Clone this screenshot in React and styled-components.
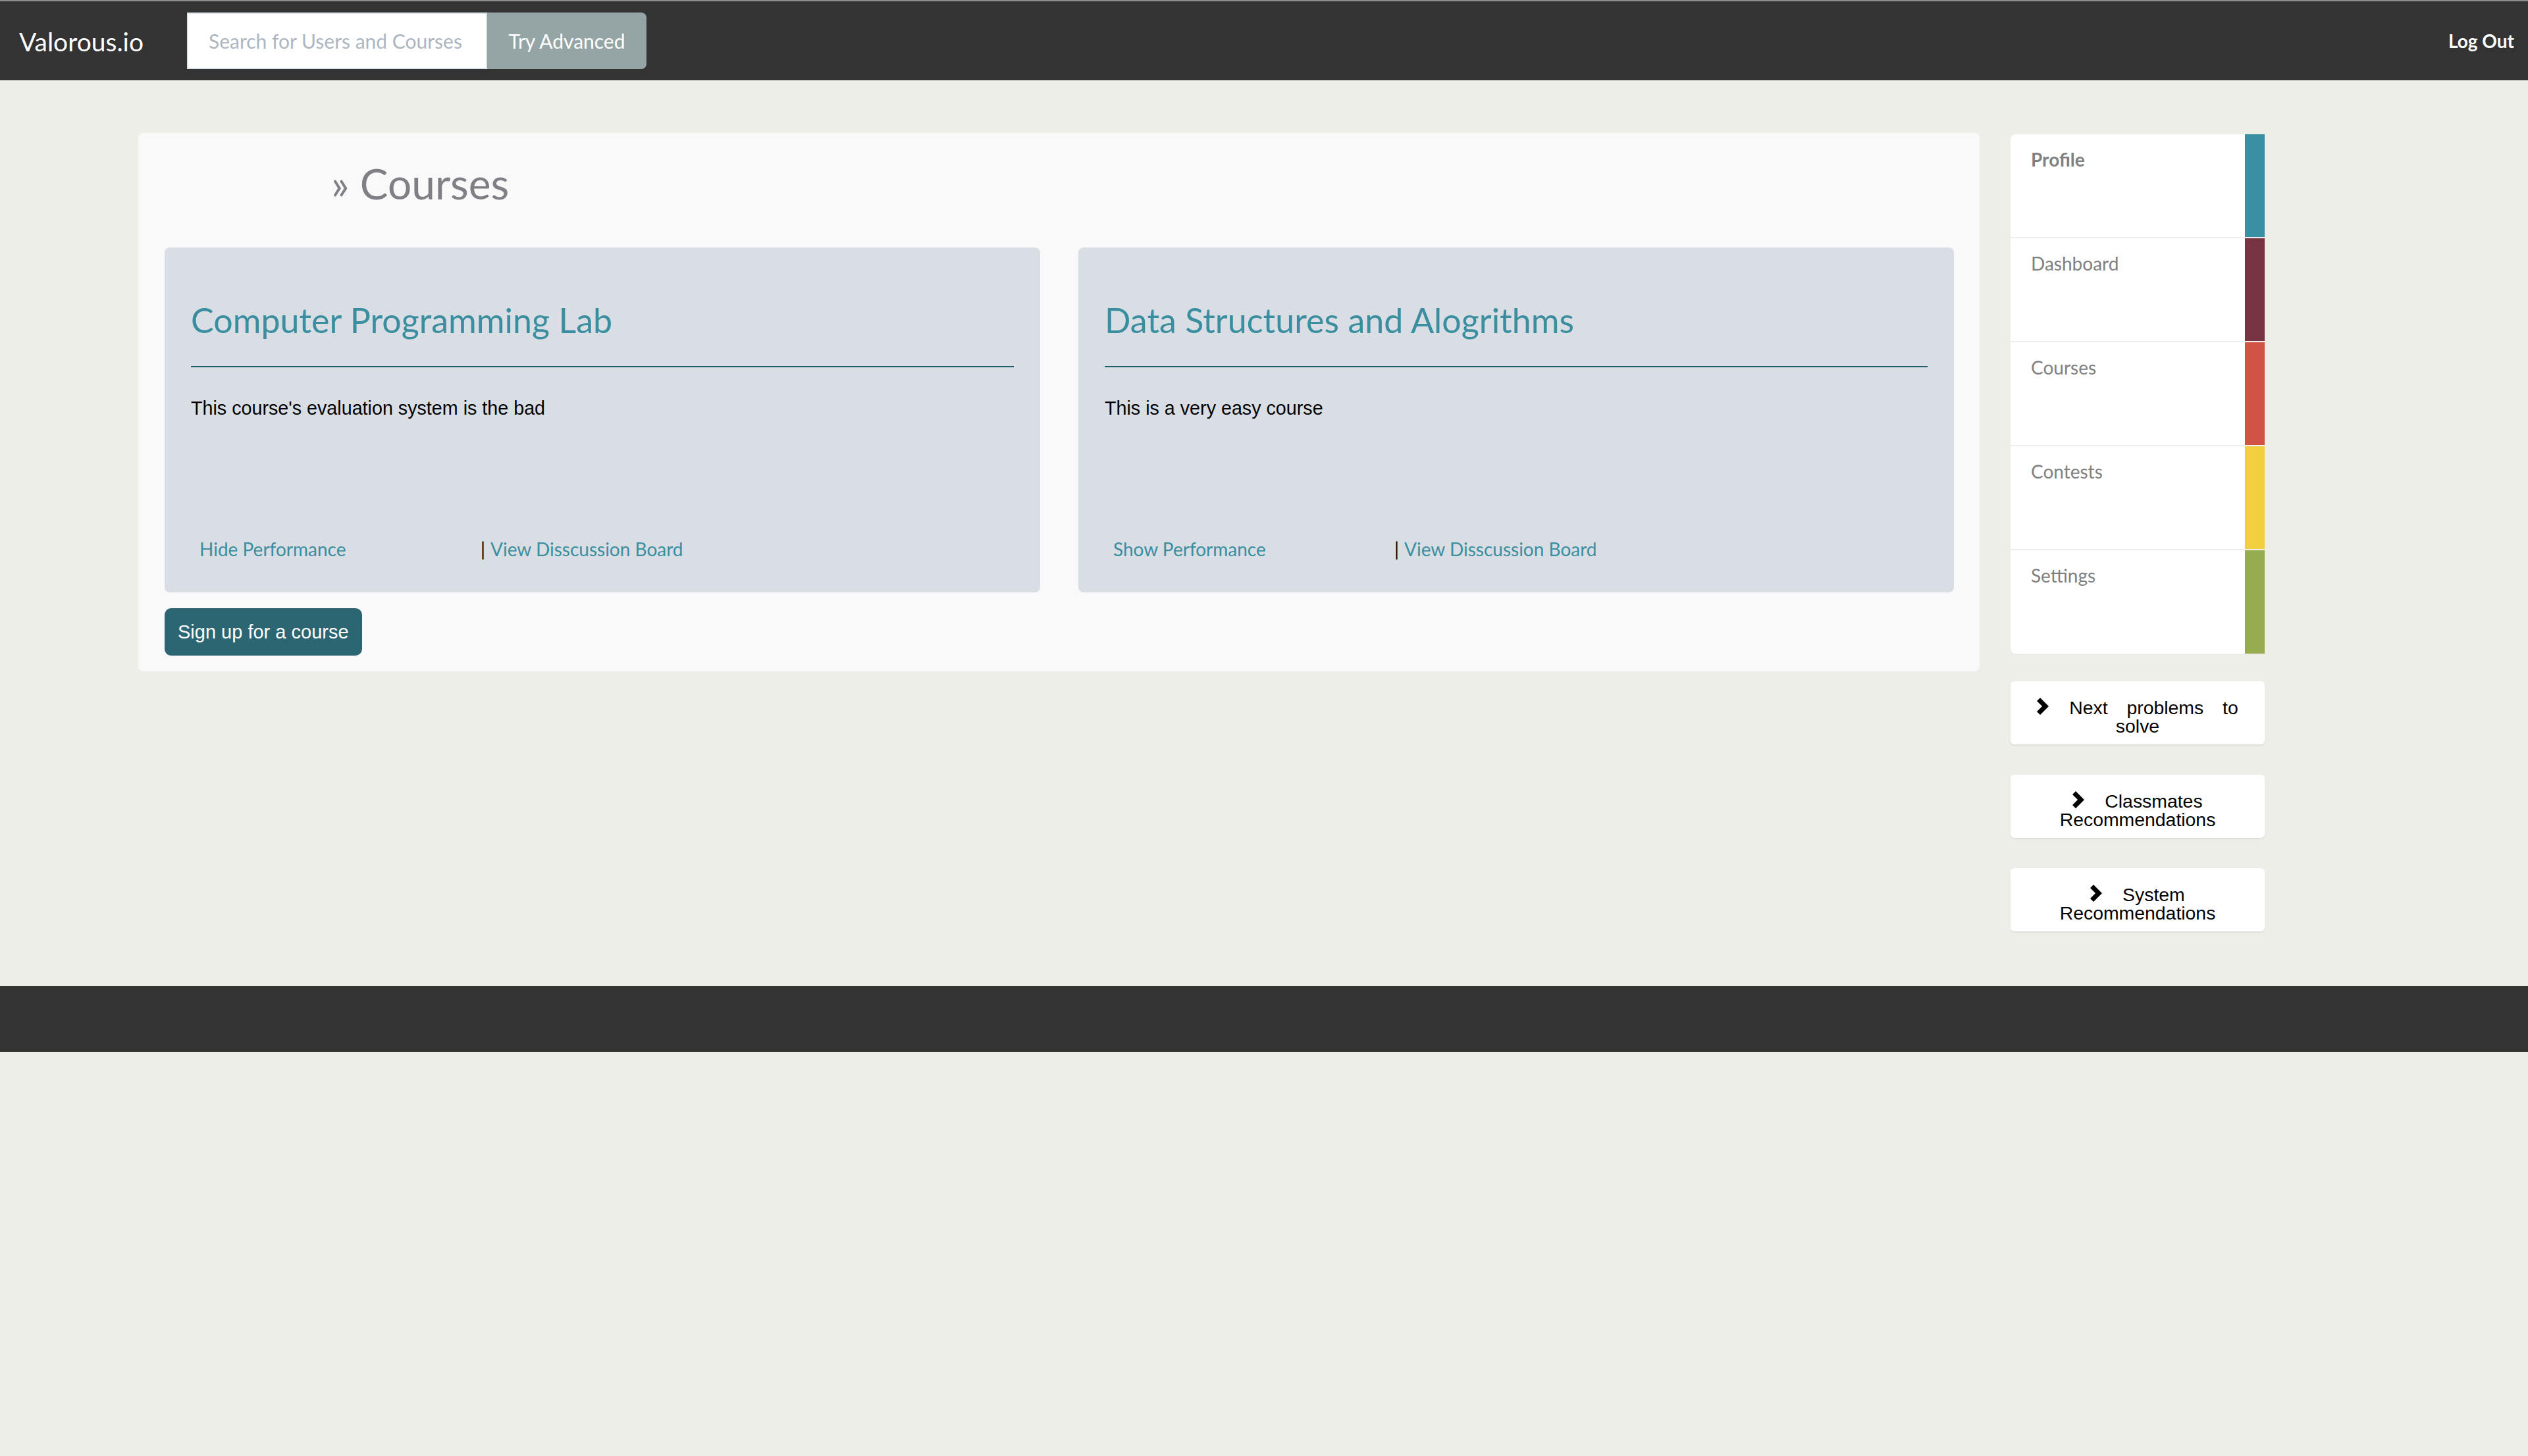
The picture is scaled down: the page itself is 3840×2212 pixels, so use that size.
import React from "react";
import styled, { createGlobalStyle } from "styled-components";

const GlobalStyle = createGlobalStyle`
  html, body {
    margin: 0;
    padding: 0;
    background-color: #eeeee8;
    font-family: Lato, "Open Sans", sans-serif;
  }
`;

const Header = styled.header`
  display: flex;
  align-items: center;
  height: 120px;
  background-color: #333333;
  border-top: 2px solid #8e8e8e;
`;

const Brand = styled.div`
  width: 284px;
  box-sizing: border-box;
  padding-left: 29px;
  color: #ffffff;
  font-size: 39px;
  line-height: 1;
  margin-top: 2px;
`;

const SearchForm = styled.form`
  display: flex;
  height: 86px;
`;

const SearchInput = styled.input`
  width: 456px;
  box-sizing: border-box;
  border: 2px solid #dbe3ea;
  padding: 0 0 0 31px;
  font-family: Lato, sans-serif;
  font-size: 30px;
  color: #333;
  outline: none;
  &::placeholder {
    color: #acb6c1;
  }
`;

const AdvancedButton = styled.button`
  width: 242px;
  border: none;
  border-radius: 0 8px 8px 0;
  background-color: #95a5a6;
  color: #ffffff;
  font-family: Lato, sans-serif;
  font-size: 30px;
  cursor: pointer;
`;

const LogOut = styled.a`
  margin-left: auto;
  padding-right: 21px;
  color: #ffffff;
  font-size: 28px;
  font-weight: 700;
  text-decoration: none;
`;

const Main = styled.main`
  display: flex;
  align-items: flex-start;
  gap: 47px;
  padding: 80px 0 83px 210px;
`;

const Panel = styled.section`
  width: 2797px;
  box-sizing: border-box;
  padding: 42px 39px 24px 40px;
  background-color: #f9f9f9;
  border-radius: 8px;
`;

const PageTitle = styled.h1`
  margin: 0 0 62px;
  padding-left: 253px;
  font-size: 64px;
  font-weight: 400;
  line-height: 70px;
  color: #7f7f85;
`;

const CardGrid = styled.div`
  display: grid;
  grid-template-columns: 1330px 1330px;
  gap: 58px;
`;

const Card = styled.article`
  display: flex;
  flex-direction: column;
  height: 524px;
  box-sizing: border-box;
  padding: 82px 40px 46px;
  background-color: #d9dee4;
  border-radius: 8px;
`;

const CardTitle = styled.h2`
  margin: 0;
  font-size: 52px;
  font-weight: 400;
  line-height: 57px;
  color: #3b8ea0;
`;

const Rule = styled.hr`
  margin: 41px 0 42px;
  border: none;
  border-top: 2px solid #1f5f68;
`;

const Description = styled.p`
  flex: 1;
  margin: 0;
  font-family: "Liberation Sans", Arial, sans-serif;
  font-size: 28.7px;
  line-height: 40px;
  color: #000;
`;

const LinkRow = styled.div`
  display: flex;
  align-items: center;
  font-size: 28px;
  line-height: 40px;
`;

const LinkCell = styled.div`
  width: ${(p) => p.width || "auto"};
  box-sizing: border-box;
  padding-left: ${(p) => p.pad || "0"};
`;

const Separator = styled.span`
  color: #000;
  margin-right: 8px;
`;

const TealLink = styled.a`
  color: #3b8ea0;
  text-decoration: none;
`;

const SignUpButton = styled.button`
  margin-top: 24px;
  height: 72px;
  padding: 0 20px;
  border: none;
  border-radius: 10px;
  background-color: #2c6672;
  color: #ffffff;
  font-family: "Liberation Sans", Arial, sans-serif;
  font-size: 29px;
  cursor: pointer;
`;

const Sidebar = styled.aside`
  width: 386px;
  display: flex;
  flex-direction: column;
  margin-top: 2px;
`;

const Nav = styled.nav`
  display: flex;
  flex-direction: column;
  background-color: #ffffff;
  border-radius: 8px 0 0 8px;
  overflow: hidden;
`;

const NavItem = styled.a`
  display: flex;
  box-sizing: border-box;
  border-bottom: ${(p) => (p.last ? "none" : "2px solid #eeeeee")};
  text-decoration: none;
  height: ${(p) => (p.last ? "157px" : "158px")};
`;

const NavLabel = styled.span`
  flex: 1;
  padding: 18px 0 0 31px;
  font-size: 28px;
  line-height: 40px;
  color: #808080;
  font-weight: ${(p) => (p.active ? 700 : 400)};
`;

const Stripe = styled.span`
  width: 30px;
  background-color: ${(p) => p.color};
`;

const RecList = styled.div`
  display: flex;
  flex-direction: column;
  gap: 46px;
  margin-top: 42px;
`;

const RecButton = styled.button`
  height: 96px;
  box-sizing: border-box;
  padding: 25px 10px 15px;
  border: none;
  border-radius: 6px;
  background-color: #ffffff;
  box-shadow: 0 2px 2px rgba(0, 0, 0, 0.07);
  font-family: "Liberation Sans", Arial, sans-serif;
  font-size: 28.4px;
  line-height: 28px;
  word-spacing: 21px;
  text-align: center;
  color: #000;
  cursor: pointer;
`;

const Chevron = () => (
  <svg width="20" height="26" viewBox="0 0 20 26" style={{ verticalAlign: "-1px" }}>
    <polygon points="0,5 5,0 18,13 5,26 0,21 8,13" fill="#000" />
  </svg>
);

const Footer = styled.footer`
  height: 100px;
  background-color: #333333;
`;

const courses = [
  {
    title: "Computer Programming Lab",
    description: "This course's evaluation system is the bad",
    performance: "Hide Performance",
  },
  {
    title: "Data Structures and Alogrithms",
    description: "This is a very easy course",
    performance: "Show Performance",
  },
];

const navItems = [
  { label: "Profile", color: "#3a8fa3", active: true },
  { label: "Dashboard", color: "#793441" },
  { label: "Courses", color: "#d05346" },
  { label: "Contests", color: "#f2cf3e" },
  { label: "Settings", color: "#97ab50" },
];

const recommendations = [
  "Next problems to solve",
  "Classmates Recommendations",
  "System Recommendations",
];

const App = () => {
  return (
    <>
      <GlobalStyle />
      <Header>
        <Brand>Valorous.io</Brand>
        <SearchForm onSubmit={(e) => e.preventDefault()}>
          <SearchInput type="text" placeholder="Search for Users and Courses" />
          <AdvancedButton type="button">Try Advanced</AdvancedButton>
        </SearchForm>
        <LogOut href="#">Log Out</LogOut>
      </Header>

      <Main>
        <Panel>
          <PageTitle>» Courses</PageTitle>
          <CardGrid>
            {courses.map((course) => (
              <Card key={course.title}>
                <CardTitle>{course.title}</CardTitle>
                <Rule />
                <Description>{course.description}</Description>
                <LinkRow>
                  <LinkCell width="440px" pad="13px">
                    <TealLink href="#">{course.performance}</TealLink>
                  </LinkCell>
                  <LinkCell>
                    <Separator>|</Separator>
                    <TealLink href="#">View Disscussion Board</TealLink>
                  </LinkCell>
                </LinkRow>
              </Card>
            ))}
          </CardGrid>
          <SignUpButton type="button">Sign up for a course</SignUpButton>
        </Panel>

        <Sidebar>
          <Nav>
            {navItems.map((item, i) => (
              <NavItem href="#" key={item.label} last={i === navItems.length - 1}>
                <NavLabel active={item.active}>{item.label}</NavLabel>
                <Stripe color={item.color} />
              </NavItem>
            ))}
          </Nav>
          <RecList>
            {recommendations.map((text) => (
              <RecButton type="button" key={text}>
                <Chevron /> {text}
              </RecButton>
            ))}
          </RecList>
        </Sidebar>
      </Main>

      <Footer />
    </>
  );
};

export default App;
